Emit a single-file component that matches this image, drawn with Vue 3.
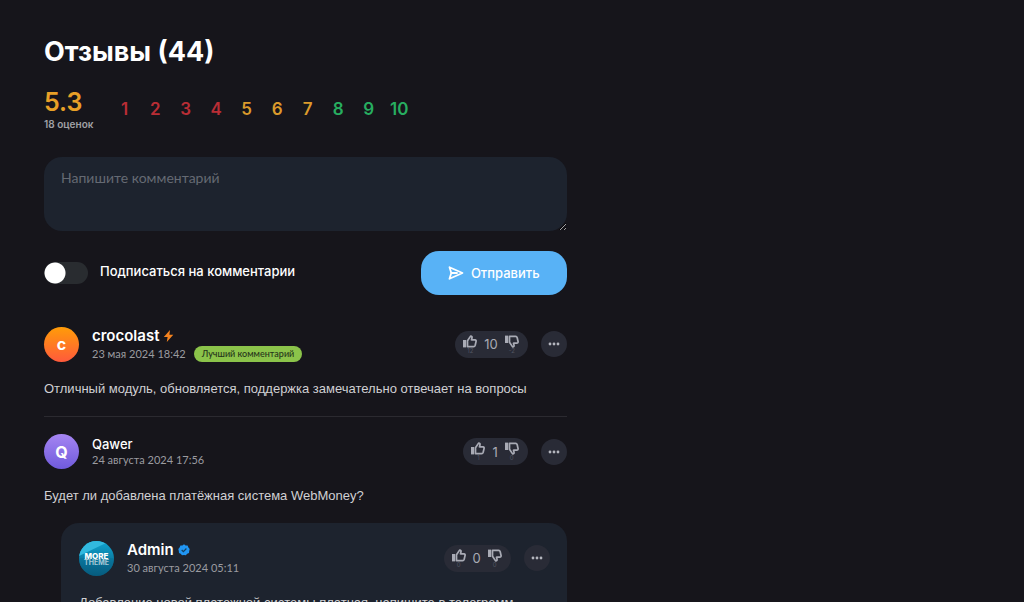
<script setup>
import { ref } from 'vue'

const draft = ref('')
const subscribed = ref(false)

const scores = Array.from({ length: 10 }, (_, i) => ({
  value: i + 1,
  tone: i < 4 ? 'low' : i < 7 ? 'mid' : 'high',
}))

const comments = [
  {
    id: 1, initial: 'c', name: 'crocolast', avatar: 'orange', mark: 'bolt', large: true,
    date: '23 мая 2024 18:42', best: true, up: 12, down: -2, total: 10,
    text: 'Отличный модуль, обновляется, поддержка замечательно отвечает на вопросы',
  },
  {
    id: 2, initial: 'Q', name: 'Qawer', avatar: 'violet',
    date: '24 августа 2024 17:56', up: 1, down: 0, total: 1,
    text: 'Будет ли добавлена платёжная система WebMoney?',
  },
  {
    id: 3, name: 'Admin', avatar: 'logo', mark: 'verified', large: true, reply: true,
    date: '30 августа 2024 05:11', up: 0, down: 0, total: 0,
    text: 'Добавление новой платежной системы платная, напишите в телеграмм',
  },
]
</script>

<template>
  <main class="page">
    <section class="reviews">
      <h1 class="title">Отзывы (44)</h1>

      <div class="rating">
        <div class="summary">
          <strong class="average">5.3</strong>
          <span class="count">18 оценок</span>
        </div>
        <div class="scores">
          <button v-for="s in scores" :key="s.value" type="button" class="score" :class="s.tone">{{ s.value }}</button>
        </div>
      </div>

      <form class="form" @submit.prevent>
        <textarea v-model="draft" class="field" aria-label="Комментарий" placeholder="Напишите комментарий"></textarea>
        <div class="actions">
          <label class="subscribe">
            <input v-model="subscribed" type="checkbox" class="switch" />
            <span>Подписаться на комментарии</span>
          </label>
          <button type="submit" class="send">
            <svg width="16" height="14" viewBox="0 0 16 14" fill="none" stroke="currentColor" stroke-width="1.8" stroke-linejoin="round" stroke-linecap="round">
              <path d="M1.5 1.2 14.5 7 1.5 12.8 3.3 7Z" />
              <path d="M3.5 7H9" />
            </svg>
            <span>Отправить</span>
          </button>
        </div>
      </form>

      <article v-for="c in comments" :key="c.id" class="comment" :class="{ reply: c.reply }">
        <header class="head">
          <div class="avatar" :class="c.avatar">
            <svg v-if="c.avatar === 'logo'" width="35" height="35" viewBox="0 0 35 35">
              <defs>
                <linearGradient id="sea" x1="0" y1="0" x2="0" y2="1">
                  <stop offset="0" stop-color="#10a5d2" />
                  <stop offset="1" stop-color="#075878" />
                </linearGradient>
              </defs>
              <rect width="35" height="35" fill="url(#sea)" />
              <path d="M0 15 27 2 20 0H0Z" fill="#32b9df" />
              <path d="M0 17H35V35H0Z" fill="#06658a" opacity=".3" />
              <text x="17.5" y="18" text-anchor="middle" class="logo-top">MORE</text>
              <text x="17.5" y="24" text-anchor="middle" class="logo-bottom">THEME</text>
            </svg>
            <template v-else>{{ c.initial }}</template>
          </div>
          <div class="who">
            <div class="name" :class="{ large: c.large }">
              <span>{{ c.name }}</span>
              <svg v-if="c.mark === 'bolt'" width="11" height="12" viewBox="0 0 11 12">
                <path d="M7 0 0.8 7H4.6L3.8 12 10.3 4.8H6.4Z" fill="#f5831f" />
              </svg>
              <svg v-if="c.mark === 'verified'" width="12" height="12" viewBox="0 0 12 12">
                <path d="M6 .3 7.6 1.4 9.6 1.5 10.4 3.4 11.7 5 11.2 6.9 11 8.9 9.2 9.8 7.8 11.3 6 11 4 11.3 2.7 9.8 1 8.9.8 6.9.3 5 1.6 3.4 2.4 1.5 4.4 1.4Z" fill="#2196f3" />
                <path d="M3.7 6 5.4 7.7 8.4 4.5" fill="none" stroke="#14405f" stroke-width="1.2" />
              </svg>
            </div>
            <div class="meta">
              <time>{{ c.date }}</time>
              <span v-if="c.best" class="best">Лучший комментарий</span>
            </div>
          </div>
          <div class="votes">
            <button type="button" class="vote" aria-label="Нравится">
              <svg width="14" height="13" viewBox="0 0 14 13">
                <path d="M0 5H3.2V12.4H0Z" fill="currentColor" />
                <path d="M4.5 5.8 7.6 1.1Q9.3.9 9 2.8L8.5 4.8H12Q13.3 5 13.1 6.3L12.2 10.3Q11.8 11.6 10.6 11.6H4.5Z" fill="none" stroke="currentColor" stroke-width="1.7" stroke-linejoin="round" />
              </svg>
              <small>{{ c.up }}</small>
            </button>
            <span class="total">{{ c.total }}</span>
            <button type="button" class="vote" aria-label="Не нравится">
              <svg width="14" height="13" viewBox="0 0 14 13">
                <path d="M0 .6H3.2V8H0Z" fill="currentColor" />
                <path d="M4.5 7.2 7.6 11.9Q9.3 12.1 9 10.2L8.5 8.2H12Q13.3 8 13.1 6.7L12.2 2.7Q11.8 1.4 10.6 1.4H4.5Z" fill="none" stroke="currentColor" stroke-width="1.7" stroke-linejoin="round" />
              </svg>
              <small>{{ c.down }}</small>
            </button>
          </div>
          <button type="button" class="more" aria-label="Ещё">
            <svg width="12" height="4" viewBox="0 0 12 4" fill="currentColor">
              <circle cx="2" cy="2" r="1.4" /><circle cx="6" cy="2" r="1.4" /><circle cx="10" cy="2" r="1.4" />
            </svg>
          </button>
        </header>
        <p class="text">{{ c.text }}</p>
      </article>
    </section>
  </main>
</template>

<style>
html {
  background: #16151b;
  scrollbar-width: none;
}
</style>

<style scoped>
.page {
  display: grid;
  grid-template-columns: minmax(0, 5fr) 4fr;
  padding: 33px 39px 0 44px;
  font-family: Inter, "Noto Sans", sans-serif;
  color: #fff;
}
button {
  padding: 0;
  border: 0;
  background: none;
  font: inherit;
  cursor: pointer;
}
svg {
  display: block;
  flex: none;
}
.title {
  margin: 0;
  font-size: 27px;
  line-height: 38px;
  font-weight: 700;
}
.rating {
  display: flex;
  gap: 16px;
  margin-top: 18px;
}
.summary {
  display: flex;
  flex-direction: column;
}
.average {
  color: #e8a027;
  font-size: 25px;
  line-height: 27px;
  font-weight: 600;
}
.count {
  color: #a1a1a6;
  font-size: 10px;
  line-height: 16px;
  font-weight: 600;
}
.scores {
  display: grid;
  grid-template-columns: repeat(10, 1fr);
  width: 305px;
  padding-top: 8px;
}
.score {
  font-size: 17px;
  line-height: 24px;
  font-weight: 600;
  align-self: start;
}
.low { color: #b92d35; }
.mid { color: #db9a2b; }
.high { color: #27ae60; }
.form {
  margin-top: 25px;
}
.field {
  display: block;
  box-sizing: border-box;
  width: 100%;
  height: 74px;
  padding: 11px 17px;
  border: 0;
  border-radius: 18px;
  outline: 0;
  background: #1d232e;
  color: #fff;
  font: 400 14px/20px Lato, "Noto Sans", sans-serif;
  resize: vertical;
}
.field::placeholder {
  color: #656a73;
}
.actions {
  display: flex;
  justify-content: space-between;
  align-items: center;
  margin-top: 20px;
}
.subscribe {
  display: flex;
  gap: 12px;
  font-size: 13px;
  line-height: 18px;
  font-weight: 500;
}
.switch {
  appearance: none;
  width: 44px;
  height: 22px;
  margin: 0;
  border-radius: 11px;
  background: radial-gradient(circle at 11px 11px, #fff 10px, transparent 11px) #292c30;
}
.switch:checked {
  background: radial-gradient(circle at 33px 11px, #fff 10px, transparent 11px) #58b2f6;
}
.send {
  display: flex;
  align-items: center;
  justify-content: center;
  gap: 7px;
  width: 146px;
  height: 44px;
  border-radius: 18px;
  background: #58b2f6;
  color: #fff;
  font-size: 13px;
  font-weight: 500;
}
.comment {
  padding-top: 17px;
}
.form + .comment {
  padding: 31px 0 17px;
  border-bottom: 1px solid #2b2a30;
}
.head {
  display: flex;
  align-items: center;
}
.avatar {
  display: grid;
  place-items: center;
  flex: none;
  width: 35px;
  height: 35px;
  margin-right: 13px;
  border-radius: 50%;
  overflow: hidden;
  font-size: 16px;
  font-weight: 700;
}
.orange { background: linear-gradient(#ff9c08, #ff5a3c); }
.violet { background: linear-gradient(#a585f2, #705bdc); }
.logo-top {
  fill: #fff;
  font-size: 8px;
  font-weight: 800;
}
.logo-bottom {
  fill: #a9c9d6;
  font-size: 7px;
  font-weight: 700;
}
.who {
  flex: 1;
}
.name {
  display: flex;
  align-items: center;
  gap: 4px;
  font-size: 13px;
  line-height: 16px;
  font-weight: 500;
}
.name.large {
  font-size: 15px;
  line-height: 20px;
  font-weight: 600;
}
.meta {
  display: flex;
  gap: 8px;
  color: #9b9ba0;
  font-family: Lato, "Noto Sans", sans-serif;
  font-size: 11px;
  line-height: 16px;
}
.best {
  padding: 0 8px;
  border-radius: 8px;
  background: #8bc34a;
  color: #25331a;
  font-size: 9px;
  font-weight: 500;
}
.votes {
  display: flex;
  align-items: center;
  gap: 7px;
  height: 27px;
  padding: 0 9px 0 8px;
  border-radius: 14px;
  background: #292b36;
  color: #a9abb5;
}
.vote {
  display: flex;
  flex-direction: column;
  align-items: center;
  color: #a9abb5;
}
.vote small {
  color: #535663;
  font-size: 6px;
  line-height: 6px;
}
.total {
  font-size: 13px;
  line-height: 20px;
}
.more {
  display: grid;
  place-items: center;
  width: 26px;
  height: 26px;
  margin-left: 13px;
  border-radius: 50%;
  background: #292b36;
  color: #b4b6be;
}
.text {
  margin: 17px 0 0;
  color: #d0d0d3;
  font-family: "Liberation Sans", Arial, sans-serif;
  font-size: 13px;
  line-height: 20px;
}
.reply {
  margin: 17px 0 0 17px;
  padding: 17px 17px 17px 18px;
  border-radius: 18px 18px 0 0;
  background: #1d232e;
}
</style>
